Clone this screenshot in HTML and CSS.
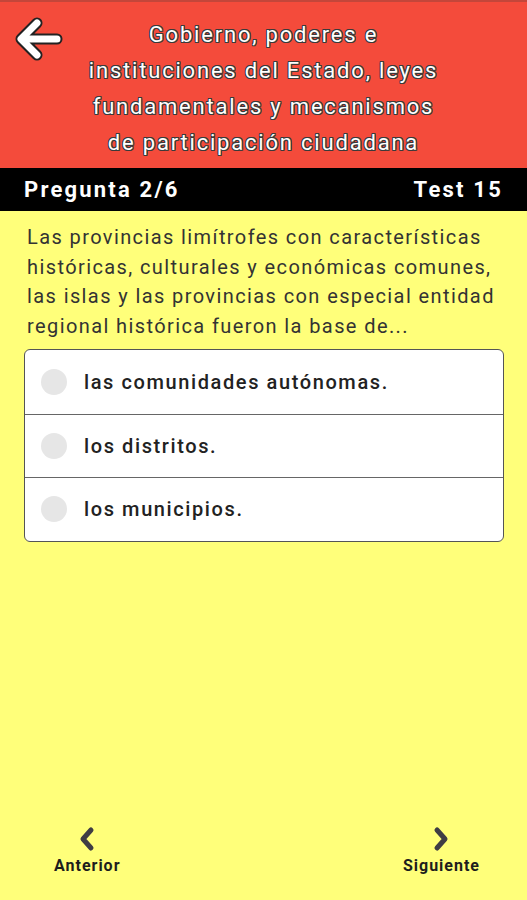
FILE: index.html
```html
<!DOCTYPE html>
<html lang="es">
<head>
<meta charset="utf-8">
<link rel="stylesheet" href="styles.css">
</head>
<body>
<div class="app">
  <header class="header">
    <button class="back" aria-label="Volver">
      <svg width="52" height="52" viewBox="0 0 52 52">
        <path d="M46 26 H12 M26 10 L10 26 L26 42" fill="none" stroke="#222" stroke-width="11" stroke-linecap="round" stroke-linejoin="round"/>
        <path d="M46 26 H12 M26 10 L10 26 L26 42" fill="none" stroke="#fff" stroke-width="7" stroke-linecap="round" stroke-linejoin="round"/>
      </svg>
    </button>
    <h1 class="title">Gobierno, poderes e instituciones del Estado, leyes fundamentales y mecanismos de participación ciudadana</h1>
  </header>
  <div class="bar">
    <span>Pregunta 2/6</span>
    <span>Test 15</span>
  </div>
  <main class="content">
    <p class="question">Las provincias limítrofes con características históricas, culturales y económicas comunes, las islas y las provincias con especial entidad regional histórica fueron la base de...</p>
    <ul class="options">
      <li class="option"><span class="radio"></span><span>las comunidades autónomas.</span></li>
      <li class="option"><span class="radio"></span><span>los distritos.</span></li>
      <li class="option"><span class="radio"></span><span>los municipios.</span></li>
    </ul>
  </main>
  <nav class="nav">
    <button class="navbtn">
      <svg width="20" height="26" viewBox="0 0 20 26"><path d="M14 4 L6 13 L14 22" fill="none" stroke="#3f3d44" stroke-width="5" stroke-linecap="round" stroke-linejoin="round"/></svg>
      <span>Anterior</span>
    </button>
    <button class="navbtn">
      <svg width="20" height="26" viewBox="0 0 20 26"><path d="M6 4 L14 13 L6 22" fill="none" stroke="#3f3d44" stroke-width="5" stroke-linecap="round" stroke-linejoin="round"/></svg>
      <span>Siguiente</span>
    </button>
  </nav>
</div>
</body>
</html>
```

FILE: styles.css
```css
* { box-sizing: border-box; }
html, body { margin: 0; padding: 0; }
body {
  font-family: Roboto, "Liberation Sans", sans-serif;
  background: #ffff7a;
}
.app {
  width: 527px;
  height: 900px;
  display: flex;
  flex-direction: column;
}
.header {
  background: #f44b3b;
  border-top: 2px solid #c4463a;
  height: 168px;
  display: flex;
  align-items: center;
  justify-content: center;
  position: relative;
}
.back {
  position: absolute;
  left: 11px;
  top: 11px;
  background: none;
  border: 0;
  padding: 0;
  width: 52px;
  height: 52px;
}
.title {
  margin: 0;
  width: 372px;
  font-size: 22px;
  font-weight: 400;
  line-height: 36px;
  text-align: center;
  color: #fff;
  letter-spacing: 1.8px;
  text-shadow: -1px -1px 0 #3a3a3a, 1px -1px 0 #3a3a3a, -1px 1px 0 #3a3a3a, 1px 1px 0 #3a3a3a, 0 1px 0 #3a3a3a, 0 -1px 0 #3a3a3a, 1px 0 0 #3a3a3a, -1px 0 0 #3a3a3a;
  padding-top: 8px;
}
.bar {
  background: #000;
  color: #fff;
  height: 43px;
  display: flex;
  align-items: center;
  justify-content: space-between;
  padding: 0 24px;
  font-size: 22px;
  font-weight: 700;
  letter-spacing: 2.2px;
}
.content {
  flex: 1;
  padding: 12px 23px 0 24px;
}
.question {
  margin: 0 0 8px 3px;
  font-size: 20px;
  line-height: 29.5px;
  letter-spacing: 1.4px;
  color: #333;
}
.options {
  list-style: none;
  margin: 0;
  padding: 0;
  background: #fff;
  border: 1.5px solid #555;
  border-radius: 6px;
  overflow: hidden;
}
.option {
  height: 63.5px;
  display: flex;
  align-items: center;
  gap: 17px;
  padding-left: 16px;
  font-size: 20px;
  font-weight: 500;
  letter-spacing: 1.6px;
  color: #222;
}
.option + .option { border-top: 1.5px solid #666; }
.radio {
  width: 26px;
  height: 26px;
  border-radius: 50%;
  background: #e6e6e6;
  flex: none;
}
.nav {
  display: flex;
  justify-content: space-between;
  padding: 0 47px 25px 54px;
}
.navbtn {
  background: none;
  border: 0;
  padding: 0;
  display: flex;
  flex-direction: column;
  align-items: center;
  gap: 4px;
  font-family: Roboto, "Liberation Sans", sans-serif;
  font-size: 16px;
  font-weight: 700;
  letter-spacing: 1px;
  color: #1d1d1d;
}
```
